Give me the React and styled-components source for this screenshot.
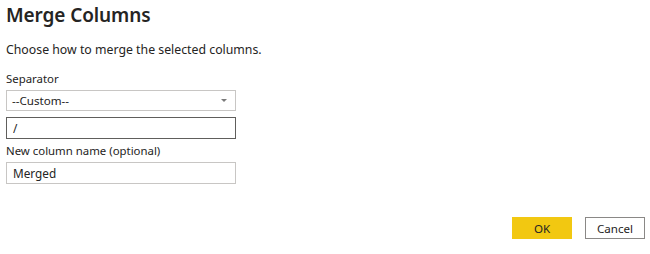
import styled, { createGlobalStyle } from "styled-components";

const GlobalStyle = createGlobalStyle`
  html, body {
    margin: 0;
    padding: 0;
    background: #ffffff;
  }
  body {
    font-family: "Noto Sans", "Open Sans", sans-serif;
    color: #252423;
  }
`;

const Dialog = styled.div`
  width: 650px;
  height: 254px;
  box-sizing: border-box;
  padding: 0 5px 0 6px;
  display: flex;
  flex-direction: column;
  background: #ffffff;
`;

const Title = styled.h1`
  margin: 0;
  padding-top: 1px;
  font-size: 19px;
  line-height: 28px;
  font-weight: 600;
  letter-spacing: -0.1px;
  color: #252423;
`;

const Description = styled.p`
  margin: 12px 0 0;
  font-size: 12.3px;
  line-height: 18px;
  color: #252423;
`;

const Field = styled.div`
  display: flex;
  flex-direction: column;
  width: 230px;
`;

const Label = styled.label`
  font-size: 11.4px;
  line-height: 16px;
  color: #252423;
  margin-top: ${(p) => p.$top || 0}px;
  margin-bottom: 3px;
`;

const Select = styled.div`
  height: 21px;
  box-sizing: border-box;
  border: 1px solid #c8c6c4;
  display: flex;
  align-items: center;
  justify-content: space-between;
  padding: 0 8px 0 5px;
  font-size: 11.6px;
  color: #252423;
`;

const Caret = styled.span`
  width: 0;
  height: 0;
  border-left: 3px solid transparent;
  border-right: 3px solid transparent;
  border-top: 3px solid #7a7a7a;
`;

const Input = styled.input`
  height: 22px;
  box-sizing: border-box;
  margin-top: ${(p) => p.$top || 0}px;
  border: 1px solid ${(p) => (p.$focus ? "#605e5c" : "#c8c6c4")};
  padding: 0 6px;
  font-family: inherit;
  font-size: 11.8px;
  color: #252423;
  outline: none;
  background: #ffffff;
`;

const Footer = styled.div`
  margin-top: auto;
  margin-bottom: 15px;
  display: flex;
  justify-content: flex-end;
  gap: 13px;
`;

const Button = styled.button`
  width: 60px;
  height: 22px;
  box-sizing: border-box;
  font-family: inherit;
  font-size: 11.6px;
  color: #252423;
  cursor: pointer;
  border: 1px solid ${(p) => (p.$primary ? "#f2c811" : "#8a8886")};
  background: ${(p) => (p.$primary ? "#f2c811" : "#ffffff")};
`;

export default function App() {
  return (
    <>
      <GlobalStyle />
      <Dialog>
        <Title>Merge Columns</Title>
        <Description>Choose how to merge the selected columns.</Description>
        <Field>
          <Label $top={12}>Separator</Label>
          <Select>
            <span>--Custom--</span>
            <Caret />
          </Select>
          <Input $top={6} $focus defaultValue="/" />
          <Label $top={4}>New column name (optional)</Label>
          <Input defaultValue="Merged" />
        </Field>
        <Footer>
          <Button $primary>OK</Button>
          <Button>Cancel</Button>
        </Footer>
      </Dialog>
    </>
  );
}
